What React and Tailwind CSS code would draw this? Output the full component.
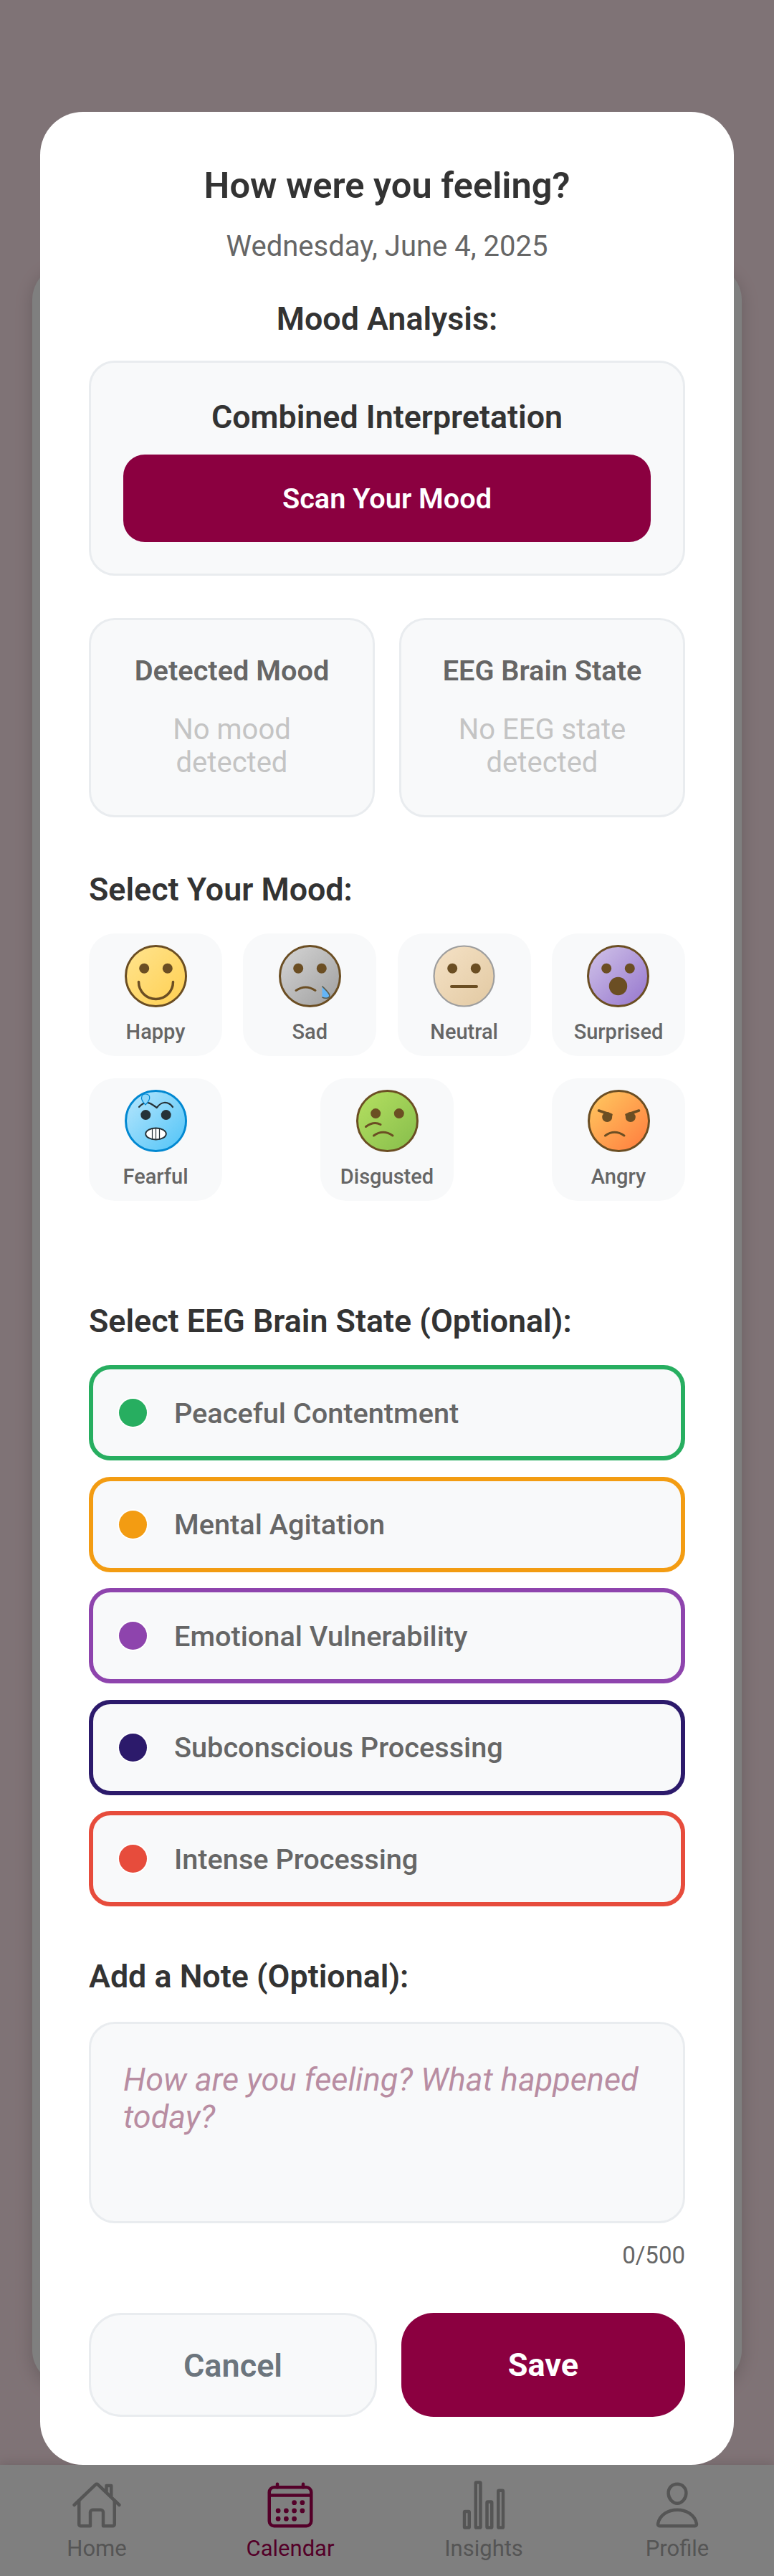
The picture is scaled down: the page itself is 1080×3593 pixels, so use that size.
import { IoHomeOutline, IoCalendarOutline, IoStatsChartOutline, IoPersonOutline } from 'react-icons/io5';

const BROWN = '#6b4e23';

function Face({ id, from, to, stroke = BROWN, strokeWidth = 3, children }) {
  return (
    <svg width="87" height="87" viewBox="-43.5 -43.5 87 87">
      <defs>
        <linearGradient id={id} x1="0" y1="0" x2="1" y2="1">
          <stop offset="0" stopColor={from} />
          <stop offset="1" stopColor={to} />
        </linearGradient>
      </defs>
      <circle r="42" fill={`url(#${id})`} stroke={stroke} strokeWidth={strokeWidth} />
      {children}
    </svg>
  );
}

const Eyes = ({ y = -10.7, fill = BROWN, x = 16.3, r = 7 }) => (
  <>
    <circle cx={-x} cy={y} r={r} fill={fill} />
    <circle cx={x} cy={y} r={r} fill={fill} />
  </>
);

const Line = ({ d, width = 3, color = BROWN }) => (
  <path d={d} fill="none" stroke={color} strokeWidth={width} strokeLinecap="round" strokeLinejoin="round" />
);

const moods = [
  {
    label: 'Happy',
    face: (
      <Face id="happy" from="#ffe48f" to="#ffcf50">
        <Eyes />
        <Line d="M-24 8A24 24 0 0 0 24 8" width={3.5} />
      </Face>
    ),
  },
  {
    label: 'Sad',
    face: (
      <Face id="sad" from="#d6d6d6" to="#9e9e9e">
        <Eyes />
        <Line d="M-19.5 20Q-6 11 7.5 20" />
        <path d="M17 14C22 19 28 24 27.5 28C26 32 20 31 17 29.5Z" fill="#64b5f6" />
        <path d="M17 14C22 19 28 24 27.5 28C26 32 20 31 17 29.5" fill="none" stroke="#5a5a4a" strokeWidth="1.6" />
      </Face>
    ),
  },
  {
    label: 'Neutral',
    face: (
      <Face id="neutral" from="#f5e2c6" to="#e2c9a2" stroke="#9e9e9e" strokeWidth={2.2}>
        <Eyes />
        <Line d="M-17.5 14.5H17.5" width={4} />
      </Face>
    ),
  },
  {
    label: 'Surprised',
    face: (
      <Face id="surprised" from="#d1c4e9" to="#9575cd">
        <Eyes />
        <circle cy="14" r="12.7" fill={BROWN} />
      </Face>
    ),
  },
  {
    label: 'Fearful',
    face: (
      <Face id="fearful" from="#b9e7fd" to="#4fc3f7" stroke="#0288d1">
        <Eyes y={-8.4} x={14.2} fill="#263238" />
        <Line d="M-23.5 -19.5Q-15 -29 -7 -24Q-2 -21 1.3 -18.5Q6 -25 11.5 -25.5Q19 -26 23.5 -19.5" width={2.2} color="#263238" />
        <path d="M-14.5 -22.5C-19 -27 -21 -31 -19.5 -34.5C-18 -38.5 -11 -38.5 -9 -34.5C-8 -31 -10 -27 -14.5 -22.5Z" fill="#8fd8fb" stroke="#0288d1" strokeWidth="1.2" />
        <ellipse cy="18" rx="14.3" ry="8" fill="#fff" stroke="#263238" strokeWidth="2" />
        <Line d="M-5 10.5V25.5M0 10V26M5 10.5V25.5" width={1.2} color="#263238" />
      </Face>
    ),
  },
  {
    label: 'Disgusted',
    face: (
      <Face id="disgusted" from="#b5e061" to="#86bd4b">
        <Eyes y={-10.4} />
        <Line d="M-30 8Q-19 0 -9.5 5" />
        <Line d="M-19 20.5Q-6 11 7.5 20.5" />
      </Face>
    ),
  },
  {
    label: 'Angry',
    face: (
      <Face id="angry" from="#ffcb61" to="#ff7a3d">
        <Eyes y={-5.4} />
        <Line d="M-28 -14.5L-10.5 -8.5" width={3.6} />
        <Line d="M28 -14.5L10.5 -8.5" width={3.6} />
        <Line d="M-19 20.5Q-6 11 7.5 20.5" />
      </Face>
    ),
  },
];

const states = [
  { label: 'Peaceful Contentment', border: 'border-[#27ae60]', dot: 'bg-[#27ae60]' },
  { label: 'Mental Agitation', border: 'border-[#f39c12]', dot: 'bg-[#f39c12]' },
  { label: 'Emotional Vulnerability', border: 'border-[#8e44ad]', dot: 'bg-[#8e44ad]' },
  { label: 'Subconscious Processing', border: 'border-[#2c1a6b]', dot: 'bg-[#2c1a6b]' },
  { label: 'Intense Processing', border: 'border-[#e74c3c]', dot: 'bg-[#e74c3c]' },
];

const tabs = [
  { label: 'Home', Icon: IoHomeOutline },
  { label: 'Calendar', Icon: IoCalendarOutline, active: true },
  { label: 'Insights', Icon: IoStatsChartOutline },
  { label: 'Profile', Icon: IoPersonOutline },
];

function ResultCard({ title, empty }) {
  return (
    <div className="w-[399px] h-[278px] rounded-[36px] border-[3px] border-[#e9ecef] bg-[#f8f9fa] pt-[47px] text-center">
      <div className="text-[39.7px] leading-[48px] font-semibold text-[#666]">{title}</div>
      <div className="mt-[35px] px-[60px] text-[40px] leading-[46px] text-[#c4c4c4]">{empty}</div>
    </div>
  );
}

export default function App() {
  return (
    <div className="relative h-[3593px] w-full flex flex-col bg-[#ffe6ec] font-['Roboto',sans-serif] overflow-hidden">
      {/* page behind the dialog */}
      <main className="flex-1 px-[45px] pt-[370px] pb-[112px]">
        <div className="h-full rounded-[48px] bg-white shadow-[0_6px_24px_rgba(0,0,0,0.18)]" />
      </main>
      <nav className="h-[155px] bg-white flex justify-around pt-[20px] shadow-[0_-4px_12px_rgba(0,0,0,0.1)]">
        {tabs.map(({ label, Icon, active }) => (
          <div key={label} className={`w-[180px] flex flex-col items-center ${active ? 'text-[#a80052]' : 'text-[#aaa]'}`}>
            <Icon size={72} />
            <span className="text-[31px] leading-[40px] mt-[5px]">{label}</span>
          </div>
        ))}
      </nav>

      {/* dialog */}
      <div className="absolute inset-0 bg-black/50 px-[56px] pt-[156px] pb-[155px]">
        <div className="h-full rounded-[60px] bg-white px-[68px] pt-[75px]">
          <h1 className="text-center text-[50.6px] leading-[56px] font-semibold text-[#333]">How were you feeling?</h1>
          <p className="mt-[33px] text-center text-[40px] leading-[48px] text-[#666]">Wednesday, June 4, 2025</p>
          <h2 className="mt-[51px] text-center text-[44.8px] leading-[52px] font-semibold text-[#333]">Mood Analysis:</h2>

          <div className="mt-[32px] h-[300px] rounded-[36px] border-[3px] border-[#e9ecef] bg-[#f8f9fa] px-[45px] pt-[50px]">
            <div className="text-center text-[44.8px] leading-[52px] font-semibold text-[#333]">Combined Interpretation</div>
            <button className="mt-[26px] h-[122px] w-full rounded-[30px] bg-[#8b0040] pt-[2px] text-[39.7px] font-semibold text-white">Scan Your Mood</button>
          </div>

          <div className="mt-[59px] flex justify-between">
            <ResultCard title="Detected Mood" empty="No mood detected" />
            <ResultCard title="EEG Brain State" empty="No EEG state detected" />
          </div>

          <h2 className="mt-[75px] text-[44.8px] leading-[52px] font-semibold text-[#333]">Select Your Mood:</h2>
          <div className="mt-[35px] flex flex-wrap justify-between gap-y-[31px]">
            {moods.map((m) => (
              <div key={m.label} className="w-[186px] h-[171px] rounded-[36px] bg-[#f8f9fa] pt-[16px] flex flex-col items-center">
                {m.face}
                <span className="mt-[16px] text-[29px] leading-[36px] font-medium text-[#666]">{m.label}</span>
              </div>
            ))}
          </div>

          <h2 className="mt-[142px] text-[44.8px] leading-[52px] font-semibold text-[#333]">Select EEG Brain State (Optional):</h2>
          <div className="mt-[35px] flex flex-col gap-[22.5px]">
            {states.map((s) => (
              <div key={s.label} className={`h-[133px] rounded-[30px] border-[6px] ${s.border} bg-[#f8f9fa] pl-[36px] flex items-center`}>
                <span className={`w-[39px] h-[39px] rounded-full ${s.dot} shadow-[0_0_0_2px_#fff]`} />
                <span className="ml-[38px] mt-[2px] text-[39.7px] font-medium text-[#666]">{s.label}</span>
              </div>
            ))}
          </div>

          <h2 className="mt-[72px] text-[44.8px] leading-[52px] font-semibold text-[#333]">Add a Note (Optional):</h2>
          <textarea
            readOnly
            placeholder="How are you feeling? What happened today?"
            className="mt-[37px] block w-full h-[281px] resize-none rounded-[36px] border-[3px] border-[#e9ecef] bg-[#f8f9fa] px-[45px] pt-[52px] text-[45px] leading-[52px] italic outline-none placeholder:text-[#b88da2]"
          />
          <div className="mt-[27px] text-right text-[33px] leading-[36px] text-[#666]">0/500</div>

          <div className="mt-[62px] flex justify-between">
            <button className="w-[402px] h-[145px] rounded-[45px] border-[3px] border-[#e9ecef] bg-[#f8f9fa] pt-[2px] text-[45px] font-semibold text-[#6c757d]">Cancel</button>
            <button className="w-[396px] h-[145px] rounded-[45px] bg-[#8b0040] text-[45px] font-bold text-white">Save</button>
          </div>
        </div>
      </div>
    </div>
  );
}
